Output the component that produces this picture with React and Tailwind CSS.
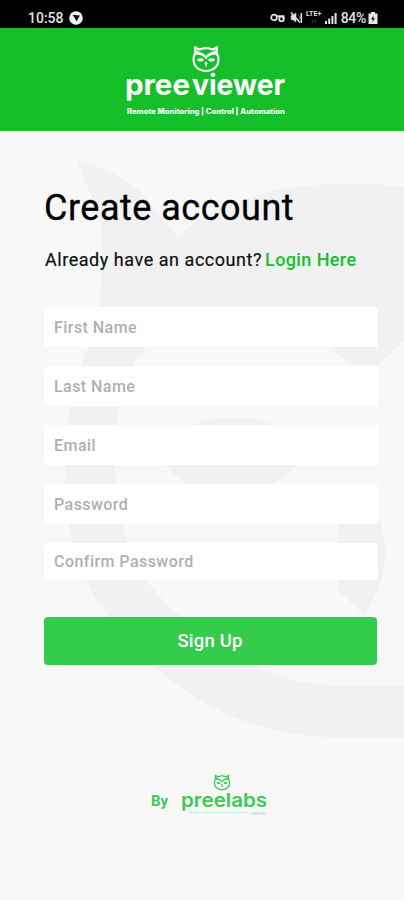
import { VolumeX } from "lucide-react"

const fields = [
  { name: "First Name", type: "text", size: "h-10 mb-[19px]" },
  { name: "Last Name", type: "text", size: "h-10 mb-[19px]" },
  { name: "Email", type: "email", size: "h-10 mb-[19px]" },
  { name: "Password", type: "password", size: "h-10 mb-[19px]" },
  { name: "Confirm Password", type: "password", size: "h-[37px] mb-[37px]" },
]

const Owl = ({ className }) => (
  <svg viewBox="0 0 28 28" className={className} fill="none" stroke="currentColor">
    <path d="M3 2.200 3.400 8C.6 12 .8 18.500 4.500 22.300c5 5 14 5 19 0 3.700-3.800 3.900-10.300 1.100-14.300L25 2.200 20.500 4.600C16.500 2.800 11.500 2.800 7.500 4.600Z" strokeWidth="2.200" strokeLinejoin="round" />
    <path d="M3 3.500C7 8.500 12.500 7 14 11.500 15.500 7 21 8.500 25 3.500v6C21.500 9.500 16.500 10 14 14.500 11.500 10 6.500 9.500 3 9.500Z" fill="currentColor" stroke="none" />
    <path d="M5 14.500c2-1.800 5-1.800 6.800 0-1 2.800-5.800 2.800-6.800 0Zm11.200 0c2-1.800 5-1.800 6.800 0-1 2.800-5.800 2.800-6.800 0ZM14 16.200l1.600 1.800L14 22.500 12.400 18Z" fill="currentColor" stroke="none" />
  </svg>
)

const StatusBar = () => (
  <div className="flex h-[28px] items-center justify-between bg-black pt-[7px] pr-[26px] pl-7 text-[14px] leading-none font-medium text-[#e0e0e0]">
    <div className="flex items-center gap-[5px]">
      <span>10:58</span>
      <svg viewBox="0 0 14 14" className="size-[14px]">
        <circle cx="7" cy="7" r="6.800" fill="#f2f2f2" />
        <path d="M3.500 3.800 11 4.500 7.500 10.500 6.300 8Z" fill="#111" />
      </svg>
    </div>
    <div className="flex items-center">
      <svg viewBox="0 0 16 10" className="mr-[4px] h-[10px] w-4" fill="none" stroke="currentColor" strokeWidth="1.800">
        <circle cx="4" cy="4.500" r="2.800" />
        <path d="M6.500 3.200h8M13.500 3v3" />
        <circle cx="11.500" cy="6" r="2.300" />
      </svg>
      <span className="relative mr-[4px] h-[13px] w-[12px]">
        <VolumeX className="size-[13px]" fill="currentColor" strokeWidth={1} />
        <svg viewBox="0 0 13 13" className="absolute inset-0 size-[13px]" fill="none">
          <path d="M1 1.500 10 11.500" stroke="#e0e0e0" strokeWidth="1.500" />
          <path d="M11.300 2v10" stroke="#e0e0e0" strokeWidth="1.500" />
        </svg>
      </span>
      <div className="mr-[3px] flex w-4 flex-col items-center text-[7px] leading-[7px] font-bold">
        <span>LTE+</span>
        <span className="text-[6px] leading-[6px] text-gray-400">↓↑</span>
      </div>
      <svg viewBox="0 0 12 12" className="mr-[4px] size-3" fill="currentColor">
        <path d="M0 9h2v3H0ZM3.200 6.500h2V12h-2ZM6.400 4h2v8h-2ZM9.600 1h2v11h-2Z" />
      </svg>
      <span className="tracking-[-0.3px]">84%</span>
      <svg viewBox="0 0 10 12" className="ml-[2px] h-3 w-[10px]">
        <path d="M3 0h4v1.500h2.500V12h-9V1.500H3Z" fill="#e8e8e8" />
        <path d="M5.500 3.500 3 7.200h1.700L4.500 10 7 6.300H5.300Z" fill="#111" />
      </svg>
    </div>
  </div>
)

const Header = () => (
  <header className="flex h-[103px] flex-col items-center bg-[#14bf2a] pt-[17px] text-white">
    <Owl className="ml-[8px] h-[28px] w-[30px] shrink-0" />
    <svg viewBox="0 0 164 56" className="-mt-[9px] ml-[6px] h-14 w-[164px] shrink-0 overflow-visible" fill="currentColor">
      <text x="2" y="31" fontSize="29" fontWeight="700" textLength="65" lengthAdjust="spacingAndGlyphs" fontFamily="Inter, sans-serif">pree</text>
      <text x="69" y="31" fontSize="29" fontWeight="700" textLength="93" lengthAdjust="spacingAndGlyphs" fontFamily="Inter, sans-serif">viewer</text>
      <text x="4" y="49.500" fontSize="7" fontWeight="800" textLength="158" lengthAdjust="spacingAndGlyphs" fontFamily="Inter, sans-serif">Remote Monitoring | Control | Automation</text>
    </svg>
  </header>
)

// Oversized owl behind the form, runs off the right edge
const Watermark = () => (
  <svg viewBox="0 131 404 769" className="absolute inset-0 h-full w-full" fill="#f1f1f1">
    <path
      fillRule="evenodd"
      d="M77 161C105 168 130 179 145 197L178 238C195 218 225 204 260 194C300 184 350 180 404 187V341L378 365H350L330 347C300 334 180 326 145 347C120 378 114 420 115 465C116 510 126 555 149 584C165 604 185 620 202 634C240 665 290 686 345 686H404V737H325C250 734 190 700 150 662C110 627 90 595 77 555C62 510 61 440 73 390C80 360 99 330 100 300C102 250 106 235 95 205Z"
    />
    <path d="M195 424C215 415 250 415 270 424L301 455C298 475 260 495 232 495C202 495 165 477 163 455Z" />
    <path d="M338 524 360 500 378 515C387 535 387 560 380 585L365 616 338 590Z" />
  </svg>
)

const Footer = () => (
  <footer className="mt-[109px] flex pl-[107px] text-[#3dc954]">
    <span className="mt-[18px] text-[15px] leading-[18px] font-bold">By</span>
    <div className="ml-[13px] flex w-[86px] flex-col items-center">
      <Owl className="ml-[-4px] h-[17px] w-[18px] shrink-0" />
      <svg viewBox="0 0 86 30" className="-mt-[4px] h-[30px] w-[86px] overflow-visible" fill="currentColor">
        <text x="0" y="20" fontSize="19" fontWeight="600" textLength="86" lengthAdjust="spacingAndGlyphs" fontFamily="Inter, sans-serif">preelabs</text>
        <path d="M8 25.500h58" stroke="currentColor" strokeOpacity=".25" strokeWidth="1" />
        <text x="69" y="27.500" fontSize="4" fillOpacity=".7" textLength="16" fontFamily="Inter, sans-serif">LIMITED</text>
      </svg>
    </div>
  </footer>
)

export default function App() {
  return (
    <div className="flex h-[900px] w-[404px] flex-col overflow-hidden bg-[#f8f8f8] font-[Roboto,sans-serif]">
      <StatusBar />
      <Header />
      <main className="relative flex-1">
        <Watermark />
        <div className="relative pt-[54px] pr-[26px] pl-11">
          <h1 className="text-[36px] leading-[46px] tracking-[0.5px] whitespace-nowrap text-black [-webkit-text-stroke:0.3px_black]">Create account</h1>
          <p className="mt-[18px] ml-[1px] flex gap-[3px] text-[18px] leading-[22px] tracking-[0.54px] whitespace-nowrap text-[#111] [-webkit-text-stroke:0.2px_currentColor]">
            Already have an account?
            <a href="#" className="font-medium tracking-[0.4px] text-[#14bf2a] [-webkit-text-stroke:0px]">Login Here</a>
          </p>
          <form className="mt-[36px] flex flex-col">
            {fields.map((field) => (
              <input
                key={field.name}
                type={field.type}
                placeholder={field.name}
                className={`${field.size} w-full rounded-[4px] bg-white px-[10px] text-[16px] font-medium tracking-[0.45px] outline-none placeholder:text-[#b0b0b0]`}
              />
            ))}
            <button type="button" className="h-12 w-[333px] rounded-[4px] bg-[#35cb4b] pt-[1px] pr-[1px] text-[18.500px] font-medium tracking-[0.2px] text-white">
              Sign Up
            </button>
          </form>
          <Footer />
        </div>
      </main>
    </div>
  )
}
